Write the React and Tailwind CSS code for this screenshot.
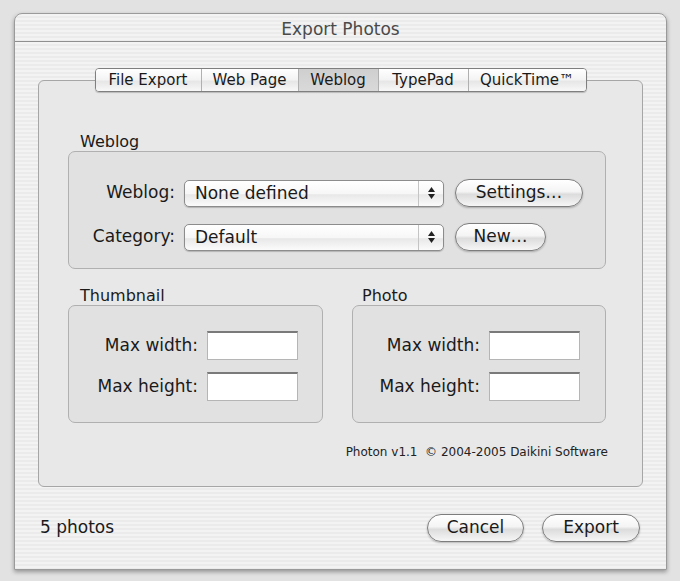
const stripes =
  "bg-[repeating-linear-gradient(180deg,#f3f3f3_0px,#f3f3f3_2px,#ebebeb_2px,#ebebeb_4px)]";

const tabs = [
  { label: "File Export", w: "w-[105px]" },
  { label: "Web Page", w: "w-[97px]" },
  { label: "Weblog", w: "w-[80px]", active: true },
  { label: "TypePad", w: "w-[90px]" },
  { label: "QuickTime™", w: "w-[118px]" },
];

function PillButton({ children, className }) {
  return (
    <button
      className={`h-[28px] rounded-full border border-[#7d7d7d] bg-[linear-gradient(180deg,#ffffff_0%,#f4f4f4_45%,#dcdcdc_55%,#f6f6f6_100%)] text-[17px] text-[#1a1a1a] shadow-[0_1px_2px_rgba(0,0,0,0.25)] ${className}`}
    >
      {children}
    </button>
  );
}

function Popup({ value }) {
  return (
    <div className="flex h-[27px] w-[260px] items-center rounded-[5px] border border-[#8c8c8c] bg-[linear-gradient(180deg,#ffffff_0%,#f7f7f7_50%,#e8e8e8_55%,#fbfbfb_100%)] shadow-[0_1px_1px_rgba(0,0,0,0.2)]">
      <span className="flex-1 pl-[10px] text-[17px] leading-none text-[#1a1a1a]">{value}</span>
      <div className="flex h-full w-[25px] flex-col items-center justify-center gap-[2px] border-l border-[#c4c4c4]">
        <svg width="7" height="5" viewBox="0 0 7 5">
          <path d="M3.5 0 L7 5 L0 5 Z" fill="#222" />
        </svg>
        <svg width="7" height="5" viewBox="0 0 7 5">
          <path d="M0 0 L7 0 L3.5 5 Z" fill="#222" />
        </svg>
      </div>
    </div>
  );
}

function Field() {
  return (
    <div className="h-[29px] w-[91px] border border-[#b5b5b5] border-t-2 border-t-[#7a7a7a] bg-white" />
  );
}

function SizeGroup({ title, labelW, titleIndent }) {
  return (
    <div className="flex flex-col">
      <div className={`h-[19px] text-[16px] leading-[19px] text-[#1a1a1a] ${titleIndent}`}>{title}</div>
      <div className="h-[118px] rounded-[7px] border border-[#b0b0b0] bg-[#e1e1e1] pt-[25px]">
        <div className="flex items-center">
          <div className={`${labelW} text-right text-[17px] text-[#1a1a1a]`}>Max width:</div>
          <div className="ml-[9px]"><Field /></div>
        </div>
        <div className="mt-[12px] flex items-center">
          <div className={`${labelW} text-right text-[17px] text-[#1a1a1a]`}>Max height:</div>
          <div className="ml-[9px]"><Field /></div>
        </div>
      </div>
    </div>
  );
}

export default function App() {
  return (
    <div className="h-[581px] w-[680px] bg-[#e2e2e2] pl-[14px] pt-[13px] font-['DejaVu_Sans',sans-serif]">
      <div className={`flex h-[557px] w-[653px] flex-col rounded-t-[8px] border border-[#9a9a9a] shadow-[0_2px_4px_rgba(0,0,0,0.35)] ${stripes}`}>
        <div className="flex h-[28px] items-center justify-center border-b border-[#8f8f8f] pt-[5px] text-[17px] text-[#4a4a4a]">
          Export Photos
        </div>

        <div className="ml-[23px] mt-[38px] h-[407px] w-[605px] rounded-[6px] border border-[#a6a6a6] bg-[#e8e8e8]">
          <div className="-mt-[13px] flex justify-center">
            <div className="flex h-[24px] overflow-hidden rounded-[4px] border border-[#7f7f7f] shadow-[0_1px_1px_rgba(0,0,0,0.2)]">
              {tabs.map((t, i) => (
                <div
                  key={t.label}
                  className={`flex items-center justify-center text-[15px] text-[#1a1a1a] ${t.w} ${
                    i > 0 ? "border-l border-[#b0b0b0]" : ""
                  } ${
                    t.active
                      ? "bg-[linear-gradient(180deg,#cfcfcf_0%,#d9d9d9_100%)]"
                      : "bg-[linear-gradient(180deg,#ffffff_0%,#f3f3f3_50%,#e6e6e6_55%,#f8f8f8_100%)]"
                  }`}
                >
                  {t.label}
                </div>
              ))}
            </div>
          </div>

          <div className="ml-[29px] mt-[40px] w-[538px]">
            <div className="h-[19px] pl-[12px] text-[16px] leading-[19px] text-[#1a1a1a]">Weblog</div>
            <div className="h-[118px] rounded-[7px] border border-[#b0b0b0] bg-[#e1e1e1] pt-[27px]">
              <div className="flex items-center">
                <div className="w-[106px] text-right text-[17px] text-[#1a1a1a]">Weblog:</div>
                <div className="ml-[9px]"><Popup value="None defined" /></div>
                <PillButton className="ml-[11px] w-[128px]">Settings…</PillButton>
              </div>
              <div className="mt-[16px] flex items-center">
                <div className="w-[106px] text-right text-[17px] text-[#1a1a1a]">Category:</div>
                <div className="ml-[9px]"><Popup value="Default" /></div>
                <PillButton className="ml-[11px] w-[91px]">New…</PillButton>
              </div>
            </div>

            <div className="mt-[17px] flex gap-[29px]">
              <div className="w-[255px]">
                <SizeGroup title="Thumbnail" labelW="w-[129px]" titleIndent="pl-[12px]" />
              </div>
              <div className="w-[254px]">
                <SizeGroup title="Photo" labelW="w-[127px]" titleIndent="pl-[10px]" />
              </div>
            </div>

            <div className="mr-[-2px] mt-[20px] text-right text-[12px] text-[#222]">
              Photon v1.1&nbsp;&nbsp;© 2004-2005 Daikini Software
            </div>
          </div>
        </div>

        <div className="flex flex-1 items-center justify-between pl-[25px] pr-[26px]">
          <span className="text-[17px] text-[#1a1a1a]">5 photos</span>
          <div className="flex gap-[18px]">
            <PillButton className="w-[97px]">Cancel</PillButton>
            <PillButton className="w-[98px]">Export</PillButton>
          </div>
        </div>
      </div>
    </div>
  );
}
